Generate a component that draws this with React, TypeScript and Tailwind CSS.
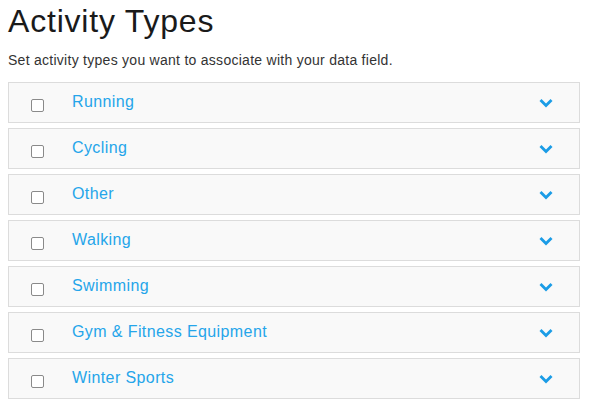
import React from "react";

const items = [
  "Running",
  "Cycling",
  "Other",
  "Walking",
  "Swimming",
  "Gym & Fitness Equipment",
  "Winter Sports",
];

function Chevron() {
  return (
    <svg width="16" height="11" viewBox="0 0 16 11" className="block">
      <path
        d="M1.5 3 L3.5 1 L8 5.5 L12.5 1 L14.5 3 L8 9.5 Z"
        fill="#1b9ce6"
      />
    </svg>
  );
}

export default function App() {
  return (
    <div
      className="bg-white w-[600px] h-[418px] pl-2 pr-5"
      style={{ fontFamily: '"Liberation Sans", Arial, sans-serif' }}
    >
      <h1 className="pt-[3px] text-[32px] leading-[37px] tracking-[0.8px] text-[#1a1a1a] font-normal">
        Activity Types
      </h1>
      <p className="mt-[10px] text-[14px] leading-5 tracking-[0.27px] text-[#333]">
        Set activity types you want to associate with your data field.
      </p>
      <div className="mt-3 flex flex-col gap-[5px]">
        {items.map((label) => (
          <div
            key={label}
            className="h-[41px] border border-[#dcdcdc] bg-[#f9f9f9] flex items-center pl-[22px] pr-[25px]"
          >
            <div className="w-[13px] h-[13px] mt-[6px] rounded-[2px] border border-[#8a8a8a] bg-white" />
            <span className="ml-[28px] -mt-[1px] text-[16px] tracking-[0.4px] text-[#25a5ea]">{label}</span>
            <div className="ml-auto mt-[2px]">
              <Chevron />
            </div>
          </div>
        ))}
      </div>
    </div>
  );
}
